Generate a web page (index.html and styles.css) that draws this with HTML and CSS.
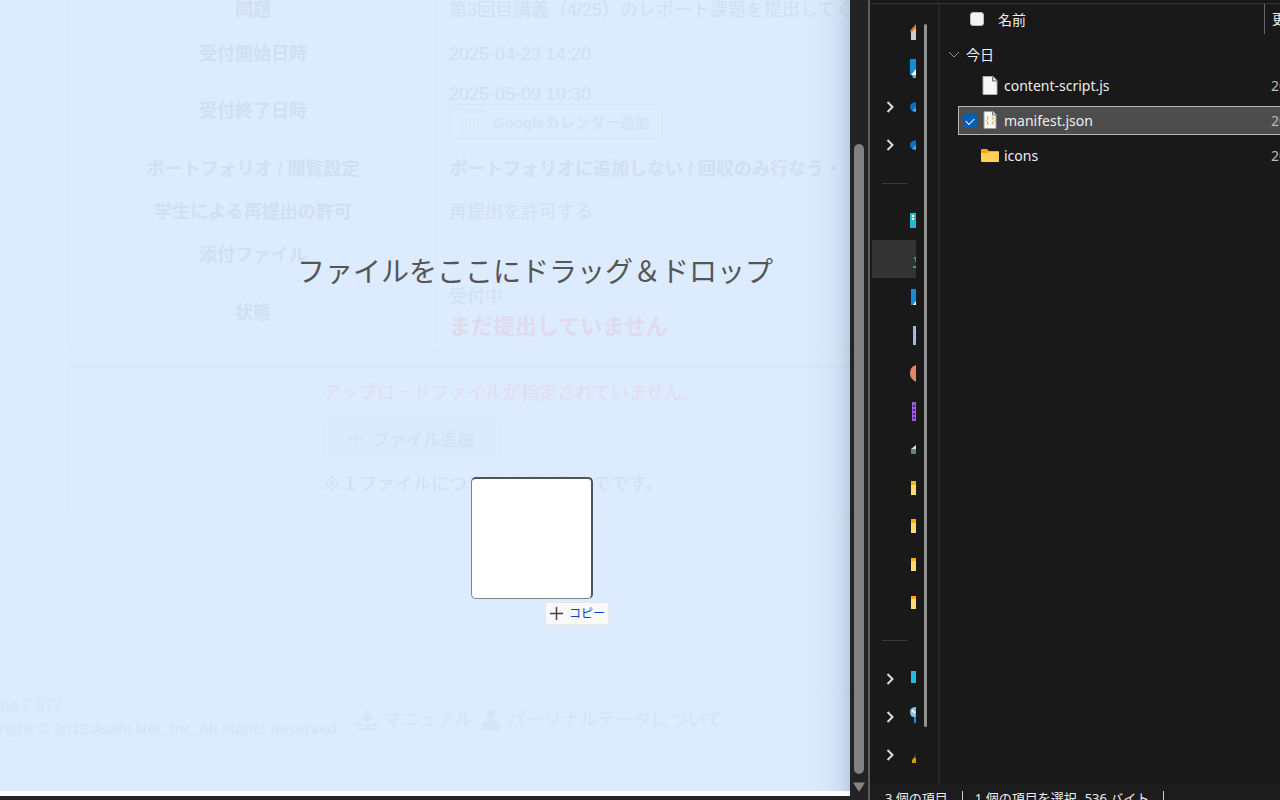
FILE: index.html
```html
<!DOCTYPE html>
<html lang="ja">
<head>
<meta charset="utf-8">
<title>レポート提出</title>
<link rel="stylesheet" href="styles.css">
</head>
<body>
<div class="desktop">
  <section class="browser">
    <div class="page">
      <main class="report">
        <table class="details">
          <tr class="row-first"><th>問題</th><td>第3回目講義（4/25）のレポート課題を提出してください</td></tr>
          <tr><th>受付開始日時</th><td>2025-04-23 14:20</td></tr>
          <tr class="row-tall"><th>受付終了日時</th><td>
            <div>2025-05-09 10:30</div>
            <button class="calendar-button" type="button">
              <svg width="24" height="26" viewBox="0 0 24 26" fill="none" stroke="#d8e7fa"><path d="M1 1h22v24H1z"/><path d="M1 3h22" stroke="#d8e9f4" stroke-width="4"/><path d="M5 9v14M9 9v14M13 9v14M17 9v14M4 11h16M4 15h16M4 19h16" stroke-dasharray="2 2"/></svg>
              Googleカレンダー追加
            </button>
          </td></tr>
          <tr><th>ポートフォリオ / 閲覧設定</th><td class="strong">ポートフォリオに追加しない / 回収のみ行なう・</td></tr>
          <tr><th>学生による再提出の許可</th><td>再提出を許可する</td></tr>
          <tr><th>添付ファイル</th><td></td></tr>
          <tr class="row-state"><th>状態</th><td>
            <div class="state">受付中</div>
            <div class="state-alert">まだ提出していません</div>
          </td></tr>
        </table>
        <div class="upload">
          <p class="upload-error">アップロードファイルが指定されていません。</p>
          <button class="add-button" type="button">
            <svg width="15" height="15" viewBox="0 0 15 15" stroke="#d3e2f6" stroke-width="2"><path d="M7.5 0v15M0 7.5h15"/></svg>
            ファイル追加
          </button>
          <p class="upload-note">※１ファイルにつき１００ＭＢまでです。</p>
        </div>
      </main>
      <footer class="footer">
        <div class="credits">
          <div class="version">ba 2.977</div>
          <div class="copyright">right © 2013 Asahi Net, Inc. All Rights Reserved.</div>
        </div>
        <a class="footer-link" href="#manual">
          <svg width="20" height="20" viewBox="0 0 20 20" fill="#d5e4f8"><path d="M8 0h4v6h5l-7 7-7-7h5z"/><path d="M0 13h4l2 2h8l2-2h4v7H0zM2 15v3h16v-3h-2l-2 2H6l-2-2z" fill-rule="evenodd"/></svg>
          マニュアル</a>
        <a class="footer-link" href="#privacy">
          <svg width="20" height="22" viewBox="0 0 20 22" fill="#d5e4f8"><circle cx="10" cy="5" r="4.500"/><path d="M8 8h4v3q7 1 7 7v3H1v-3q0-6 7-7z"/></svg>
          パーソナルデータについて</a>
      </footer>
      <div class="drop-message">ファイルをここにドラッグ＆ドロップ</div>
      <div class="drag-ghost"></div>
      <div class="drag-tip">
        <svg width="13" height="13" viewBox="0 0 13 13" stroke="#444" stroke-width="1.500"><path d="M6.500 0v13M0 6.500h13"/></svg>
        コピー
      </div>
      <div class="edge-shadow"></div>
    </div>
    <div class="scrollbar">
      <div class="scroll-thumb"></div>
      <svg width="12" height="10" viewBox="0 0 12 10" fill="#858585"><path d="M1 .5h10q1 0 .4 1L6.600 9q-.6.8-1.200 0L.6 1.500Q0 .5 1 .5z"/></svg>
    </div>
  </section>

  <section class="explorer">
    <div class="explorer-body">
      <nav class="sidebar">
        <div class="side-item"><svg class="chev"></svg><svg class="side-icon" viewBox="0 0 6 20"><path d="M1 9l5-5v15H1z" fill="#ccc"/><path d="M0 10l6-7v4l-5 5z" fill="#e87817"/></svg></div>
        <div class="side-item"><svg class="chev"></svg><svg class="side-icon" viewBox="0 0 6 20"><path d="M0 0h6v16H0z" fill="#158bdc"/><path d="M6 10v6H1z" fill="#fff"/><path d="M2 16h4v3H3z" fill="#62a8e8"/></svg></div>
        <div class="side-item"><svg class="chev" viewBox="0 0 8 12"><path d="M1.500 1L6.500 6l-5 5"/></svg><svg class="side-icon" viewBox="0 0 6 20"><path d="M6 5Q0 6 0 10t6 5z" fill="#0871cf"/><path d="M6 10L2 14l4 1z" fill="#37aaf1"/></svg></div>
        <div class="side-item"><svg class="chev" viewBox="0 0 8 12"><path d="M1.500 1L6.500 6l-5 5"/></svg><svg class="side-icon" viewBox="0 0 6 20"><path d="M6 5Q0 6 0 10t6 5z" fill="#0871cf"/><path d="M6 10L2 14l4 1z" fill="#37aaf1"/></svg></div>
        <div class="side-item side-rule"></div>
        <div class="side-item"><svg class="chev"></svg><svg class="side-icon" viewBox="0 0 6 20"><path d="M0 2h6v15H0z" fill="#28b5d4"/><path d="M2 4h2v2H2zM2 7h2v2H2z" fill="#fff"/></svg></div>
        <div class="side-item current"><svg class="chev"></svg><svg class="side-icon" viewBox="0 0 6 20"><path d="M4 8h2v2H4zM5 10h1v3H5zM3 17h3v2H3z" fill="#28a474"/></svg></div>
        <div class="side-item"><svg class="chev"></svg><svg class="side-icon" viewBox="0 0 6 20"><path d="M1 2h5v16H1z" fill="#158bdc"/><path d="M6 14v4H3z" fill="#fff"/></svg></div>
        <div class="side-item"><svg class="chev"></svg><svg class="side-icon" viewBox="0 0 6 20"><path d="M3 1h3v19H3z" fill="#a3b9d2"/><path d="M5 6h1M5 9h1M5 12h1" stroke="#dce6f0"/></svg></div>
        <div class="side-item"><svg class="chev"></svg><svg class="side-icon" viewBox="0 0 6 20"><path d="M6 2Q0 4 0 10t6 9z" fill="#e88364"/></svg></div>
        <div class="side-item"><svg class="chev"></svg><svg class="side-icon" viewBox="0 0 6 20"><path d="M2 1h4v19H2z" fill="#9c5ce8"/><path d="M4 4v14" stroke="#4b2184" stroke-width="2" stroke-dasharray="2 2"/></svg></div>
        <div class="side-item"><svg class="chev"></svg><svg class="side-icon" viewBox="0 0 6 20"><path d="M1 10l5-4v5H1z" fill="#ddd"/><path d="M1 10h5v5H1z" fill="#777"/><path d="M4 11h2v2H4z" fill="#2db34a"/></svg></div>
        <div class="side-item"><svg class="chev"></svg><svg class="side-icon" viewBox="0 0 6 20"><path d="M1 4h5v14H1z" fill="#ffd972"/><path d="M1 4h5v4H1z" fill="#ffb000"/></svg></div>
        <div class="side-item"><svg class="chev"></svg><svg class="side-icon" viewBox="0 0 6 20"><path d="M1 4h5v14H1z" fill="#ffd972"/><path d="M1 4h5v4H1z" fill="#ffb000"/></svg></div>
        <div class="side-item"><svg class="chev"></svg><svg class="side-icon" viewBox="0 0 6 20"><path d="M1 5h5v13H1z" fill="#ffd972"/><path d="M1 5h5v3H1z" fill="#ffb000"/></svg></div>
        <div class="side-item"><svg class="chev"></svg><svg class="side-icon" viewBox="0 0 6 20"><path d="M1 5h5v13H1z" fill="#ffd972"/><path d="M1 5h5v3H1z" fill="#ffb000"/></svg></div>
        <div class="side-item side-rule last-rule"></div>
        <div class="side-item"><svg class="chev" viewBox="0 0 8 12"><path d="M1.500 1L6.500 6l-5 5"/></svg><svg class="side-icon" viewBox="0 0 6 20"><path d="M1 2h5v12H1z" fill="#28b9df"/></svg></div>
        <div class="side-item"><svg class="chev" viewBox="0 0 8 12"><path d="M1.500 1L6.500 6l-5 5"/></svg><svg class="side-icon" viewBox="0 0 6 20"><path d="M6 0Q0 0 0 5t4 5h2z" fill="#7fc4e9"/><path d="M2 3l3 3" stroke="#e9f8ff" stroke-width="2"/><path d="M4 10h2v6H4z" fill="#1997c8"/></svg></div>
        <div class="side-item"><svg class="chev" viewBox="0 0 8 12"><path d="M1.500 1L6.500 6l-5 5"/></svg><svg class="side-icon" viewBox="0 0 6 20"><path d="M2 15l4-5v8H2z" fill="#d99c0c"/><path d="M3 12l3-4v5z" fill="#3b321f"/></svg></div>
      </nav>
      <div class="side-scroll"><div class="side-thumb"></div></div>
      <div class="files">
        <div class="columns">
          <input class="check" type="checkbox" id="all">
          <label class="column-name" for="all">名前</label>
          <span class="column-date">更新日時</span>
        </div>
        <div class="group">
          <svg width="12" height="7" viewBox="0 0 12 7" fill="none" stroke="#999"><path d="M1 1l5 5 5-5"/></svg>
          今日
        </div>
        <div class="file">
          <span class="check-space"></span>
          <svg class="file-icon" viewBox="0 0 18 20"><path d="M2 .5h10l4 4v14H2z" fill="#f8f8f8" stroke="#aaa"/><path d="M11.500 1v4H16" fill="#ddd" stroke="#666"/></svg>
          <span class="file-name">content-script.js</span><span class="file-date">2025</span>
        </div>
        <div class="file selected">
          <input class="check" type="checkbox" id="manifest" checked>
          <svg class="file-icon" viewBox="0 0 18 20"><path d="M3 .5h9l3 3v14H3z" fill="#f8f8f8" stroke="#999"/><path d="M11.500 1v3H15" fill="#ddd" stroke="#777"/><path d="M8 6H6.500v2.500L5.500 9.500l1 1V13H8M10.500 6H12v2.500l1 1-1 1V13h-1.500" fill="none" stroke="#b6b83f"/></svg>
          <label class="file-name" for="manifest">manifest.json</label><span class="file-date">2025</span>
        </div>
        <div class="file">
          <span class="check-space"></span>
          <svg class="file-icon" viewBox="0 0 18 20"><path d="M0 4q0-1 1-1h5l2 2h9q1 0 1 1v9H0z" fill="#f2a900"/><path d="M0 7h7l2-1h9v9q0 1-1 1H1q-1 0-1-1z" fill="#ffd257"/></svg>
          <span class="file-name">icons</span><span class="file-date">2025</span>
        </div>
      </div>
    </div>
    <div class="status"><span>3 個の項目</span><span class="status-bar"></span><span>1 個の項目を選択</span><span class="size">536 バイト</span><span class="status-bar"></span></div>
  </section>
</div>
</body>
</html>
```

FILE: styles.css
```css
* { box-sizing: border-box; }

body {
  margin: 0;
  background: #191919;
  font-family: "Liberation Sans", "Noto Sans CJK JP", sans-serif;
}

p { margin: 0; }
button { font-family: inherit; }
svg { flex: none; }

.desktop {
  display: grid;
  grid-template-columns: minmax(0, 870fr) minmax(0, 410fr);
  height: 100vh;
  overflow: hidden;
}

/* Browser window */
.browser {
  display: grid;
  grid-template-columns: minmax(0, 1fr) 20px;
  min-height: 0;
  background: #242424;
}

.page {
  position: relative;
  display: flex;
  flex-direction: column;
  min-height: 0;
  margin-bottom: 4px;
  overflow: hidden;
  border-bottom: 5px solid #fff;
  background: #dcebfe;
  color: #d0dff3;
  font-size: 18px;
  line-height: 20px;
}

.report { margin-left: 69px; }

.details {
  width: 900px;
  border-collapse: separate;
  border-spacing: 0;
  table-layout: fixed;
  border: solid #d8e8f8;
  border-width: 0 0 1px 1px;
  padding-bottom: 2px;
}

.details th,
.details td {
  height: 43px;
  padding: 0;
  vertical-align: middle;
}

.details th { width: 366px; }
.details td {
  padding-left: 12px;
  border-left: 1px solid #d8e8f8;
  text-align: left;
  white-space: nowrap;
}
.details .row-first th,
.details .row-first td { height: 32px; vertical-align: top; }
.details .row-tall th,
.details .row-tall td { height: 72px; }
.details .row-state th { height: 73px; }
.details .row-state td { height: 73px; padding-top: 4px; }
.details .strong { font-weight: bold; }

.calendar-button {
  display: flex;
  align-items: center;
  gap: 8px;
  height: 35px;
  padding: 0 11px;
  border: 1px solid #d6e5f9;
  border-radius: 3px;
  background: transparent;
  color: #d4e3f7;
  font-size: 15px;
  font-weight: bold;
}

.state { line-height: 24px; }
.state-alert {
  color: #e0daee;
  font-size: 22px;
  font-weight: bold;
  line-height: 36px;
}

.upload {
  display: flex;
  flex-direction: column;
  align-items: flex-start;
  width: 900px;
  margin-top: 12px;
  padding: 15px 0 18px 253px;
  border: solid #d8e8f6;
  border-width: 4px 0 1px 1px;
}

.upload-error { color: #e3dcef; }

.add-button {
  display: flex;
  align-items: center;
  gap: 9px;
  height: 45px;
  margin: 14px 0 12px;
  padding: 0 26px 2px 24px;
  border: 1px solid #d9e8fb;
  border-radius: 6px;
  background: #dbeafd;
  color: #d3e2f6;
  font-size: 17px;
  font-weight: bold;
}

.footer {
  display: flex;
  align-items: flex-start;
  height: 100px;
  margin-top: auto;
  border-top: 1px solid #d9e8fb;
}

.credits {
  width: 341px;
  margin-right: 16px;
  overflow: hidden;
  color: #d5e4f8;
  white-space: nowrap;
}
.version { padding-top: 2px; font-size: 16px; line-height: 24px; }
.copyright {
  display: flex;
  justify-content: flex-end;
  font-family: "Open Sans", sans-serif;
  font-size: 15px;
  font-weight: 600;
}

.footer-link {
  display: flex;
  align-items: center;
  gap: 6px;
  height: 56px;
  margin-right: 9px;
  color: #d4e3fb;
  text-decoration: none;
}

.drop-message {
  position: absolute;
  top: 252px;
  left: 297px;
  color: #555;
  font-size: 28px;
  line-height: 42px;
  white-space: nowrap;
}

.drag-ghost {
  position: absolute;
  top: 477px;
  left: 471px;
  width: 122px;
  height: 122px;
  border: 1px solid #7d858f;
  border-top: 2px solid #50555b;
  border-right: 2px solid #50555b;
  border-radius: 5px;
  background: #fff;
}

.drag-tip {
  position: absolute;
  top: 602px;
  left: 545px;
  display: flex;
  align-items: center;
  gap: 6px;
  height: 23px;
  padding: 0 3px 0 4px;
  border: 1px solid #e8e8e8;
  border-radius: 2px;
  background: #f9f9f9;
  color: #1438d0;
  font-size: 12px;
  white-space: nowrap;
}

.edge-shadow {
  position: absolute;
  top: 0;
  right: 0;
  bottom: 0;
  width: 44px;
  background: linear-gradient(to right, transparent, rgba(60, 80, 110, 0.03) 50%, rgba(60, 80, 110, 0.08) 75%, rgba(60, 80, 110, 0.2));
}

.scrollbar {
  display: flex;
  flex-direction: column;
  align-items: center;
  gap: 8px;
  padding: 144px 3px 8px 2px;
  border-right: 2px solid #5c5c5c;
  background: #232323;
}
.scroll-thumb {
  flex: 1;
  width: 10px;
  border-radius: 5px;
  background: #818181;
}

/* File explorer */
.explorer {
  display: flex;
  flex-direction: column;
  min-width: 0;
  min-height: 0;
  padding-top: 3px;
  color: #eee;
  font-family: "Noto Sans", "Noto Sans CJK JP", sans-serif;
  font-size: 14px;
}

.explorer-body {
  display: flex;
  flex: 1;
  min-height: 0;
  border-top: 1px solid #333;
}

.sidebar {
  flex: none;
  width: 46px;
  padding: 8px 0 0 2px;
  overflow: hidden;
}
.side-item {
  display: flex;
  align-items: center;
  justify-content: space-between;
  height: 38px;
  padding-left: 14px;
}
.current { background: #333; }
.side-rule::before {
  content: "";
  width: 25px;
  height: 1px;
  margin-left: -4px;
  background: #3a3a3a;
}
.last-rule { height: 40px; }
.chev {
  width: 8px;
  height: 12px;
  fill: none;
  stroke: #ddd;
  stroke-width: 2;
}
.side-icon { width: 6px; height: 20px; }

.side-scroll {
  flex: none;
  width: 24px;
  padding: 20px 0 57px 8px;
  border-right: 2px solid #252525;
}
.side-thumb {
  width: 3px;
  height: 100%;
  border-radius: 2px;
  background: #929292;
}

.files {
  flex: 1;
  min-width: 0;
  padding-left: 18px;
  overflow: hidden;
  white-space: nowrap;
}

.columns {
  display: flex;
  align-items: center;
  height: 30px;
  padding-left: 12px;
}
.column-name { flex: 1; padding-left: 14px; }
.column-date {
  width: 16px;
  padding-left: 7px;
  border-left: 1px solid #666;
  line-height: 30px;
  overflow: hidden;
}

.check {
  flex: none;
  width: 14px;
  height: 14px;
  margin: 0;
  appearance: none;
  border: 1px solid #bbb;
  border-radius: 3px;
  background: #f2f2f2;
}
.check:checked {
  display: grid;
  place-items: center;
  border-color: #005fb8;
  background: #005fb8;
}
.check:checked::after {
  content: "";
  width: 7px;
  height: 4px;
  border: solid #fff;
  border-width: 0 0 1px 1px;
  transform: rotate(-45deg);
}

.group {
  display: flex;
  align-items: center;
  gap: 6px;
  height: 40px;
  margin-left: -10px;
}

.file {
  display: flex;
  align-items: center;
  height: 29px;
  margin-bottom: 6px;
  padding-left: 4px;
  border: 1px solid transparent;
  border-right: 0;
}
.file:nth-child(3) { margin-top: -3px; }
.selected { border-color: #b5b5b5; background: #4d4d4d; }
.check-space { width: 14px; }
.file-icon { width: 18px; height: 20px; margin-left: 4px; }
.file-name { flex: 1; padding-left: 5px; }
.file-date { width: 9px; color: #bbb; overflow: hidden; }

.status {
  display: flex;
  flex: none;
  align-items: flex-start;
  height: 16px;
  padding: 4px 0 0 15px;
  background: #1c1c1c;
  font-size: 13px;
  line-height: 20px;
  white-space: nowrap;
  overflow: hidden;
}
.status-bar {
  width: 1px;
  height: 14px;
  margin: 3px 12px 0 14px;
  background: #ccc;
}
.size { padding-left: 8px; }
```
